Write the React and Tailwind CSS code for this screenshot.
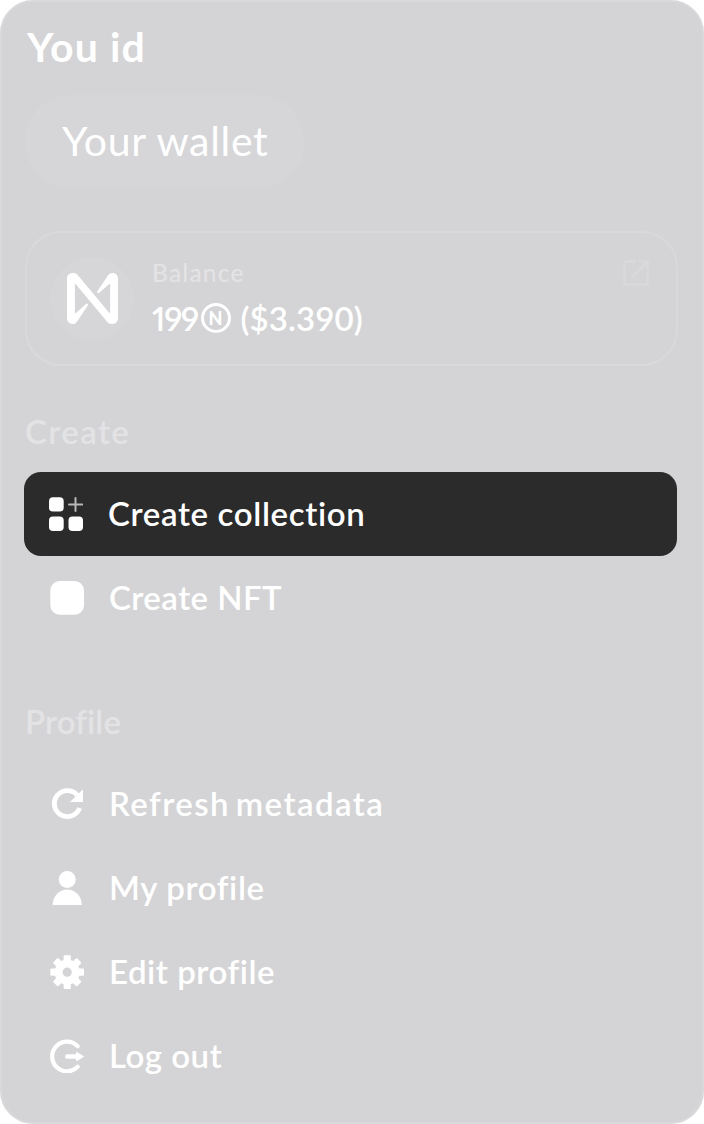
const Near = () => (
  <svg viewBox="0 0 90 90" className="h-[51px] w-[51px]" fill="#fff">
    <path d="M72.2,4.6L53.4,32.5c-1.3,1.9,1.2,4.2,3,2.6L74.9,19c0.5-0.4,1.2-0.1,1.2,0.6v50.3c0,0.7-0.9,1-1.3,0.5l-56-67C17,1.2,14.4,0,11.5,0h-2C4.3,0,0,4.3,0,9.6v70.8C0,85.7,4.3,90,9.6,90c3.3,0,6.4-1.7,8.2-4.6l18.8-27.9c1.3-1.9-1.2-4.2-3-2.6l-18.5,16c-0.5,0.4-1.2,0.1-1.2-0.6V20.1c0-0.7,0.9-1,1.3-0.5l56,67c1.8,2.2,4.5,3.4,7.3,3.4h2c5.3,0,9.6-4.3,9.6-9.6V9.6c0-5.3-4.3-9.6-9.6-9.6C77.1,0,74,1.7,72.2,4.6z" />
  </svg>
);

const Icon = ({ children }) => (
  <svg viewBox="0 0 34 34" className="h-[34px] w-[34px] shrink-0" fill="#fff">
    {children}
  </svg>
);

const CollectionIcon = () => (
  <Icon>
    <rect x="0" y="0.2" width="14.7" height="14.4" rx="4" />
    <rect x="0" y="19.6" width="14.7" height="14.4" rx="4" />
    <rect x="19.5" y="19.6" width="14.5" height="14.4" rx="4" />
    <path d="M26.5 1v13M20 7.5h13.4" stroke="#b8b8b8" strokeWidth="2" strokeLinecap="round" />
  </Icon>
);

const SquareIcon = () => (
  <Icon>
    <rect x="0.3" y="0" width="33.7" height="33.7" rx="9.5" />
  </Icon>
);

const RefreshIcon = () => (
  <Icon>
    <path d="M29.6 21A13 13 0 1 1 27.3 8.2" fill="none" stroke="#fff" strokeWidth="4.9" />
    <path d="M33 2.3v12.7H20z" />
  </Icon>
);

const UserIcon = () => (
  <Icon>
    <circle cx="17.2" cy="8.5" r="8.5" />
    <path d="M2.7 34C2.7 25.5 9 18.6 17.2 18.6S31.8 25.5 31.8 34z" />
  </Icon>
);

const GearIcon = () => (
  <Icon>
    <circle cx="17.2" cy="17.2" r="8.6" fill="none" stroke="#fff" strokeWidth="8" />
    {[0, 45, 90, 135, 180, 225, 270, 315].map((a) => (
      <rect key={a} x="13.6" y="0.3" width="7.2" height="8" rx="1.3" transform={`rotate(${a} 17.2 17.2)`} />
    ))}
  </Icon>
);

const LogoutIcon = () => (
  <Icon>
    <g transform="translate(0.3 0.5)">
      <path d="M27.3 6.7A14.8 14.8 0 1 0 27.3 27.3" fill="none" stroke="#fff" strokeWidth="4.3" strokeLinecap="round" />
      <path d="M17 17h10" stroke="#fff" strokeWidth="4.4" strokeLinecap="round" />
      <path d="M26.3 12.8L33.2 17L26.3 21.2z" stroke="#fff" strokeWidth="1" strokeLinejoin="round" />
    </g>
  </Icon>
);

const Row = ({ icon, label, tracking }) => (
  <li className="flex h-[84px] items-center gap-[25px] pl-[26px]">
    {icon}
    <span className={`-mt-[2px] text-[33px] leading-[40px] font-semibold whitespace-nowrap ${tracking}`}>{label}</span>
  </li>
);

export default function App() {
  return (
    <main className="flex h-[1124px] w-[703.5px] flex-col rounded-[33px] border-2 border-[#d9d9db] bg-[#d4d4d6] pt-[21px] pr-[24px] pl-[22px] font-['Lato','Open_Sans',sans-serif] text-white">
      <h1 className="pl-[3px] text-[41px] leading-[48px] font-bold tracking-[1.1px]">You id</h1>
      <div className="mt-[24px] ml-px flex h-[93px] w-[279px] shrink-0 items-center rounded-full bg-[#d6d6d8] pb-[2px] pl-[37px]">
        <span className="text-[41px] leading-[48px] font-normal tracking-[0.7px] whitespace-nowrap">Your wallet</span>
      </div>

      <section className="mt-[43px] ml-px flex h-[135px] w-[653px] shrink-0 items-center rounded-[36px] border-2 border-[#d9d9db] pl-[23px]">
        <div className="flex h-[84px] w-[84px] items-center justify-center rounded-full bg-[#d6d6d8]">
          <Near />
        </div>
        <div className="ml-[18px] flex flex-col">
          <span className="mt-px text-[24.5px] leading-[32px] font-medium tracking-[1.2px] text-[#e3e3e5]">Balance</span>
          <span className="mt-[6px] flex items-center text-[33px] leading-[46px] font-semibold whitespace-nowrap">
            <span className="w-[48.5px] tracking-[-1.2px] proportional-nums">199</span>
            <span className="flex h-[30px] w-[30px] shrink-0 items-center justify-center rounded-full border-[3px] border-white text-[18px] leading-[20px] font-black">N</span>
            <span className="ml-[10px] tracking-[0.1px]">($3.390)</span>
          </span>
        </div>
        <svg viewBox="0 0 26 26" className="mr-[27px] mb-[52px] ml-auto h-[26px] w-[26px]" fill="none" stroke="#d9d9db" strokeWidth="2.6">
          <path d="M13 1.5H3.2A1.7 1.7 0 0 0 1.5 3.2v19.6a1.7 1.7 0 0 0 1.7 1.7h19.6a1.7 1.7 0 0 0 1.7-1.7V13M16 1.5h8.5V10M24.5 1.5L8.5 17.5" />
        </svg>
      </section>

      <h2 className="mt-[45px] pl-px text-[33px] leading-[40px] font-semibold tracking-[1.4px] text-[#e3e3e5]">Create</h2>
      <ul className="mt-[21px]">
        <li className="flex h-[84px] w-[653px] items-center gap-[25px] rounded-[17px] bg-[#2b2b2b] pl-[25px]">
          <CollectionIcon />
          <span className="-mt-[2px] text-[33px] leading-[40px] font-semibold tracking-[0.65px] whitespace-nowrap">Create collection</span>
        </li>
        <Row icon={<SquareIcon />} label="Create NFT" tracking="tracking-[0.45px]" />
      </ul>

      <h2 className="mt-[61px] pl-px text-[33px] leading-[40px] font-semibold tracking-[0.1px] text-[#e3e3e5]">Profile</h2>
      <ul className="mt-[21px]">
        <Row icon={<RefreshIcon />} label="Refresh metadata" tracking="tracking-[1.45px] [word-spacing:-4px]" />
        <Row icon={<UserIcon />} label="My profile" tracking="tracking-[0.65px]" />
        <Row icon={<GearIcon />} label="Edit profile" tracking="tracking-[0.55px]" />
        <Row icon={<LogoutIcon />} label="Log out" tracking="tracking-[0.5px]" />
      </ul>
    </main>
  );
}
